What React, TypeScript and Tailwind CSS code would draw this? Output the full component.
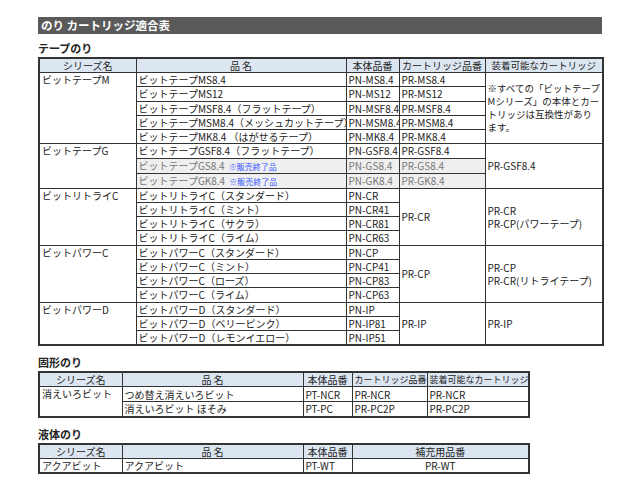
const F = { fontFamily: '"Noto Sans CJK JP", "DejaVu Sans", sans-serif' };
const base = "border border-[#333] px-[2px] py-0 leading-[13px] overflow-hidden align-middle";
const td = base + " whitespace-nowrap";
const th = "border border-[#333] bg-[#dce6f1] px-[2px] py-0 font-normal text-center leading-[13px] whitespace-nowrap overflow-hidden";

function Disc() {
  return <span className="text-[8px] text-[#3355ff] ml-[4px]">※販売終了品</span>;
}

export default function App() {
  const main: any[] = [
    { s: "ビットテープM", sr: 5, n: "ビットテープMS8.4", b: "PN-MS8.4", c: "PR-MS8.4", cr: 1, a: <>※すべての「ビットテープMシリーズ」の本体とカートリッジは互換性があります。</>, ar: 5, w: true },
    { n: "ビットテープMS12", b: "PN-MS12", c: "PR-MS12", cr: 1 },
    { n: "ビットテープMSF8.4（フラットテープ）", b: "PN-MSF8.4", c: "PR-MSF8.4", cr: 1 },
    { n: "ビットテープMSM8.4（メッシュカットテープ）", b: "PN-MSM8.4", c: "PR-MSM8.4", cr: 1 },
    { n: "ビットテープMK8.4 （はがせるテープ）", b: "PN-MK8.4", c: "PR-MK8.4", cr: 1 },
    { s: "ビットテープG", sr: 3, n: "ビットテープGSF8.4（フラットテープ）", b: "PN-GSF8.4", c: "PR-GSF8.4", cr: 1, a: "PR-GSF8.4", ar: 3 },
    { n: "ビットテープGS8.4", d: true, b: "PN-GS8.4", c: "PR-GS8.4", cr: 1 },
    { n: "ビットテープGK8.4", d: true, b: "PN-GK8.4", c: "PR-GK8.4", cr: 1 },
    { s: "ビットリトライC", sr: 4, n: "ビットリトライC（スタンダード）", b: "PN-CR", c: "PR-CR", cr: 4, a: <>PR-CR<br />PR-CP(パワーテープ)</>, ar: 4 },
    { n: "ビットリトライC（ミント）", b: "PN-CR41" },
    { n: "ビットリトライC（サクラ）", b: "PN-CR81" },
    { n: "ビットリトライC（ライム）", b: "PN-CR63" },
    { s: "ビットパワーC", sr: 4, n: "ビットパワーC（スタンダード）", b: "PN-CP", c: "PR-CP", cr: 4, a: <>PR-CP<br />PR-CR(リトライテープ)</>, ar: 4 },
    { n: "ビットパワーC（ミント）", b: "PN-CP41" },
    { n: "ビットパワーC（ローズ）", b: "PN-CP83" },
    { n: "ビットパワーC（ライム）", b: "PN-CP63" },
    { s: "ビットパワーD", sr: 3, n: "ビットパワーD（スタンダード）", b: "PN-IP", c: "PR-IP", cr: 3, a: "PR-IP", ar: 3 },
    { n: "ビットパワーD（ベリーピンク）", b: "PN-IP81" },
    { n: "ビットパワーD（レモンイエロー）", b: "PN-IP51" },
  ];
  const W1 = ["w-[97px]", "w-[210px]", "w-[53px]", "w-[86px]", "w-[118px]"];
  const W2 = ["w-[83px]", "w-[181px]", "w-[49px]", "w-[75px]", "w-[102px]"];
  const H1 = ["シリーズ名", "品 名", "本体品番", "カートリッジ品番", "装着可能なカートリッジ"];
  return (
    <div className="w-[640px] h-[480px] bg-white text-[#222] text-[10px] pt-[17px] pl-[38px]" style={F}>
      <div className="w-[564px] h-[17px] bg-[#5a5a5a] text-white font-bold text-[11.5px] leading-[17px] pl-[3px]">のり カートリッジ適合表</div>
      <div className="font-bold text-[11px] mt-[6px] h-[17px] leading-[17px]">テープのり</div>
      <table className="border-collapse table-fixed w-[564px] max-w-[564px] border-2 border-[#333]">
        <colgroup>{W1.map((w, i) => <col key={i} className={w} />)}</colgroup>
        <thead><tr className="h-[14px]">{H1.map((h, i) => <th key={i} className={th + " " + W1[i] + (i === 4 ? " text-[9.5px]" : "")}>{h}</th>)}</tr></thead>
        <tbody>
          {main.map((r, i) => (
            <tr key={i} className="h-[14.26px]">
              {r.s && <td rowSpan={r.sr} className={td + " align-top"}>{r.s}</td>}
              <td className={td + (r.d ? " bg-[#efefef] text-[#777]" : "")}>{r.n}{r.d && <Disc />}</td>
              <td className={td + (r.d ? " bg-[#efefef] text-[#777]" : "")}>{r.b}</td>
              {r.c && <td rowSpan={r.cr} className={td + (r.d ? " bg-[#efefef] text-[#777]" : "")}>{r.c}</td>}
              {r.a && <td rowSpan={r.ar} className={r.w ? base + " whitespace-normal break-all text-[9.5px] leading-[11px]" : td}>{r.a}</td>}
            </tr>
          ))}
        </tbody>
      </table>
      <div className="font-bold text-[11px] mt-[8px] h-[17px] leading-[17px]">固形のり</div>
      <table className="border-collapse table-fixed w-[490px] max-w-[490px] border-2 border-[#333]">
        <colgroup>{W2.map((w, i) => <col key={i} className={w} />)}</colgroup>
        <thead><tr className="h-[14px]">{H1.map((h, i) => <th key={i} className={th + " " + W2[i] + (i >= 3 ? " text-[9px]" : "")}>{h}</th>)}</tr></thead>
        <tbody>
          <tr className="h-[15px]"><td rowSpan={2} className={td + " align-top"}>消えいろビット</td><td className={td}>つめ替え消えいろビット</td><td className={td}>PT-NCR</td><td className={td}>PR-NCR</td><td className={td}>PR-NCR</td></tr>
          <tr className="h-[15px]"><td className={td}>消えいろビット ほそみ</td><td className={td}>PT-PC</td><td className={td}>PR-PC2P</td><td className={td}>PR-PC2P</td></tr>
        </tbody>
      </table>
      <div className="font-bold text-[11px] mt-[8px] h-[17px] leading-[17px]">液体のり</div>
      <table className="border-collapse table-fixed w-[490px] max-w-[490px] border-2 border-[#333]">
        <colgroup><col className="w-[83px]" /><col className="w-[181px]" /><col className="w-[49px]" /><col className="w-[177px]" /></colgroup>
        <thead><tr className="h-[14px]"><th className={th + " w-[83px]"}>シリーズ名</th><th className={th + " w-[181px]"}>品 名</th><th className={th + " w-[49px]"}>本体品番</th><th className={th + " w-[177px]"}>補充用品番</th></tr></thead>
        <tbody>
          <tr className="h-[15px]"><td className={td}>アクアビット</td><td className={td}>アクアビット</td><td className={td}>PT-WT</td><td className={td + " text-center"}>PR-WT</td></tr>
        </tbody>
      </table>
    </div>
  );
}
